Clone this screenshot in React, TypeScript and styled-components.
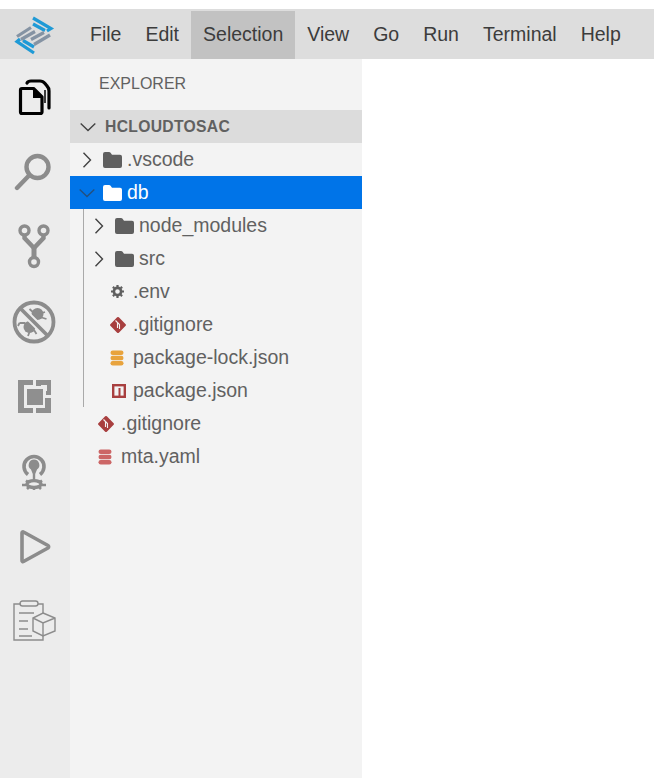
import React from 'react';
import styled, { createGlobalStyle } from 'styled-components';

const GlobalStyle = createGlobalStyle`
  html, body {
    margin: 0;
    padding: 0;
    background: #fff;
  }
  body {
    font-family: 'Liberation Sans', Arial, sans-serif;
  }
`;

const Page = styled.div`
  width: 654px;
  height: 778px;
  overflow: hidden;
  padding-top: 9px;
  box-sizing: border-box;
  display: flex;
  flex-direction: column;
`;

const MenuBar = styled.header`
  height: 50px;
  flex: none;
  display: flex;
  align-items: flex-end;
  background: #dddddd;
`;

const LogoBox = styled.div`
  width: 78px;
  height: 50px;
  flex: none;
  display: flex;
  align-items: center;
  padding: 2px 0 0 8px;
  box-sizing: border-box;
`;

const MenuItem = styled.div<{ $active?: boolean }>`
  height: 48px;
  line-height: 47px;
  padding: 0 12px;
  font-size: 19.5px;
  color: #3c3c3c;
  background: ${(props) => (props.$active ? '#c2c2c2' : 'transparent')};
`;

const Body = styled.div`
  flex: 1;
  display: flex;
  min-height: 0;
`;

const ActivityBar = styled.nav`
  width: 70px;
  flex: none;
  background: #ececec;
`;

const ActivityItem = styled.div`
  height: 75px;
  display: flex;
  align-items: center;
  justify-content: center;
  margin-left: -2px;
`;

const SideBar = styled.aside`
  width: 292px;
  flex: none;
  background: #f3f3f3;
`;

const SideTitle = styled.div`
  height: 51px;
  line-height: 49px;
  padding-left: 29px;
  font-size: 16px;
  color: #616161;
`;

const SectionHeader = styled.div`
  height: 33px;
  display: flex;
  align-items: center;
  background: #dcdcdc;
  color: #616161;
  font-size: 15.7px;
  font-weight: bold;
  letter-spacing: 0.3px;
`;

const SectionChevron = styled.span`
  width: 35px;
  flex: none;
  display: flex;
  justify-content: center;
  padding-left: 1px;
  box-sizing: border-box;
`;

const Row = styled.div<{ $selected?: boolean; $left: number }>`
  height: 33px;
  display: flex;
  align-items: center;
  padding-left: ${(props) => props.$left}px;
  font-size: 19.5px;
  color: ${(props) => (props.$selected ? '#ffffff' : '#616161')};
  background: ${(props) => (props.$selected ? '#0074e8' : 'transparent')};
`;

const Twistie = styled.span`
  width: 33px;
  flex: none;
  display: flex;
  justify-content: center;
`;

const IconBox = styled.span<{ $inset?: number }>`
  width: 24px;
  flex: none;
  display: flex;
  align-items: center;
  box-sizing: border-box;
  padding-left: ${(props) => props.$inset ?? 0}px;
`;

const Group = styled.div`
  position: relative;

  &::before {
    content: '';
    position: absolute;
    left: 13px;
    top: 0;
    bottom: 0;
    width: 1px;
    background: #a9a9a9;
  }
`;

const Logo = () => (
  <svg width="50" height="46" viewBox="0 0 50 46" fill="none">
    <g stroke="#1f9ad6" strokeWidth="3.2">
      <path d="M25 6 L43 16.5 L39 19" />
      <path d="M25 12 L37 18.5" />
      <path d="M26 41 L9 29.5 L12 27" />
      <path d="M26 35 L15 28.5" />
    </g>
    <g stroke="#8593a3" strokeWidth="3.2">
      <path d="M9 24.5 L23 15.5" />
      <path d="M13 27.5 L27 19.5" />
      <path d="M26 32.5 L42 23" />
      <path d="M23 27.5 L36 20.5" />
    </g>
  </svg>
);

const FilesIcon = () => (
  <svg width="34" height="38" viewBox="0 0 34 38" fill="none" stroke="#000">
    <path d="M5 10.5 H16.5 L25 19 V34 A1.5 1.5 0 0 1 23.5 35.5 H5 A1.5 1.5 0 0 1 3.5 34 V12 A1.5 1.5 0 0 1 5 10.5 Z" strokeWidth="3.2" strokeLinejoin="round" />
    <path d="M16 10.5 L25.5 20 H16 Z" fill="#000" stroke="none" />
    <path d="M10 5 Q11 3 14 3 H23 Q26 3 28 5.5 L30 8 Q32 10 32 13 V30" strokeWidth="3.2" strokeLinecap="round" />
    <path d="M28 12 V25" strokeWidth="1.5" />
  </svg>
);

const SearchIcon = () => (
  <svg width="40" height="40" viewBox="0 0 40 40" fill="none" stroke="#8c8c8c" strokeWidth="4.4" strokeLinecap="round">
    <circle cx="23.5" cy="15" r="11" />
    <path d="M15.5 23 L3 36" />
  </svg>
);

const GitIcon = () => (
  <svg width="34" height="46" viewBox="0 0 34 46" fill="none" stroke="#8c8c8c" strokeWidth="3.4">
    <circle cx="7.5" cy="6.5" r="4.5" />
    <circle cx="26.5" cy="6.5" r="4.5" />
    <circle cx="17" cy="38" r="4.5" />
    <path d="M7.5 11 V14 L17 24 L26.5 14 V11" strokeWidth="4.4" />
    <path d="M17 24 V33.5" strokeWidth="5" />
  </svg>
);

const NoDebugIcon = () => (
  <svg width="44" height="44" viewBox="0 0 44 44" fill="none" stroke="#8c8c8c">
    <circle cx="17.5" cy="27" r="6" fill="#8c8c8c" stroke="none" />
    <circle cx="25.5" cy="14" r="6" fill="#8c8c8c" stroke="none" />
    <path d="M17.5 9 L22 13 M33 12 L27 14 M34.5 19 L28 17 M7.5 23 H12.5 L15 26 M7.5 23 L6 26 M24.5 34 L22 30 M16 36 L17.5 32" strokeWidth="1.8" />
    <path d="M8 8 L36 36" stroke="#ececec" strokeWidth="7.5" />
    <path d="M8 8 L36 36" strokeWidth="3.8" />
    <circle cx="22" cy="22" r="19.5" strokeWidth="3.8" />
  </svg>
);

const ExtensionsIcon = () => (
  <svg width="35" height="35" viewBox="8 7 35 35" fill="#8f8f8f">
    <path d="M9 8 H24 V13 H15 V36 H24 V41 H9 Z" />
    <path d="M27 8 H42 V23 H37 V19 H38 V13 H32 V14 H27 Z" />
    <path d="M27 36 H36 V26 H42 V41 H27 Z" />
    <rect x="18" y="17" width="16" height="16" />
  </svg>
);

const TreeIcon = () => (
  <svg width="36" height="38" viewBox="8 8 36 38" fill="none" stroke="#8c8c8c">
    <path d="M20 29.5 A10 10 0 1 1 32 29.5" strokeWidth="3.6" />
    <path d="M26 14.5 a5.5 5.5 0 0 1 3 10 L27.2 29 V37 H24.8 V29 L23 24.5 a5.5 5.5 0 0 1 3 -10 Z" fill="#8c8c8c" stroke="none" />
    <ellipse cx="26" cy="39" rx="7" ry="3.4" strokeWidth="3.4" />
    <path d="M14 40 H19 M33 40 H38 M18 35.5 L20 37 M34 35.5 L32 37 M19 44 L21 42 M33 44 L31 42 M26 43 V45" strokeWidth="2.6" />
  </svg>
);

const PlayIcon = () => (
  <svg width="36" height="38" viewBox="0 0 36 38" fill="none" stroke="#8c8c8c" strokeWidth="3.6" strokeLinejoin="round">
    <path d="M6 5 V32.5 a1 1 0 0 0 1.5 1 L32 20 a1.5 1.5 0 0 0 0 -2.5 L7.5 4 A1 1 0 0 0 6 5 Z" />
  </svg>
);

const DeployIcon = () => (
  <svg width="44" height="44" viewBox="0 0 44 44" fill="none" stroke="#8c8c8c" strokeWidth="1.4">
    <path d="M9 4 H2 V40 H31 V36" />
    <path d="M26 4 H31 V13" />
    <rect x="8" y="1" width="18" height="5" rx="2.5" />
    <path d="M7 13 H22 M7 21 H16 M7 29 H16 M7 36 H20" strokeWidth="1.6" />
    <path d="M31 13 L43 18 V31 L31 36 L21 31 V18 Z M21 18 L31 23 L43 18 M31 23 V36" />
  </svg>
);

const Chevron = ({ open, color = '#424242' }: { open?: boolean; color?: string }) => (
  <svg width="16" height="16" viewBox="0 0 16 16" fill="none" stroke={color} strokeWidth="1.4">
    {open ? <path d="M0.7 4.5 L8 11.5 L15.3 4.5" /> : <path d="M4.5 0.7 L11.5 8 L4.5 15.3" />}
  </svg>
);

const FolderIcon = ({ color = '#5f5f5f' }: { color?: string }) => (
  <svg width="19" height="16" viewBox="0 0 19 16" fill={color}>
    <path d="M0 2 a2 2 0 0 1 2 -2 H6 a2 2 0 0 1 1.6 .8 L9 2.8 H17 a2 2 0 0 1 2 2 V14 a2 2 0 0 1 -2 2 H2 a2 2 0 0 1 -2 -2 Z" />
  </svg>
);

const GearIcon = () => (
  <svg width="15" height="15" viewBox="0 0 15 15" fill="none" stroke="#5f5f5f">
    <circle cx="7.5" cy="7.5" r="3.6" strokeWidth="2.6" />
    <path d="M7.5 1 V3 M7.5 12 V14 M1 7.5 H3 M12 7.5 H14 M2.9 2.9 L4.3 4.3 M10.7 10.7 L12.1 12.1 M2.9 12.1 L4.3 10.7 M10.7 4.3 L12.1 2.9" strokeWidth="2.2" />
  </svg>
);

const GitFileIcon = () => (
  <svg width="18" height="18" viewBox="0 0 18 18">
    <rect x="3" y="3" width="12" height="12" rx="1.2" fill="#a83f3f" transform="rotate(45 9 9)" />
    <path d="M6.5 4.5 L10.5 8.5 V13 M8.5 6.5 V12" stroke="#f3f3f3" strokeWidth="1.1" fill="none" />
  </svg>
);

const DatabaseIcon = ({ color }: { color: string }) => (
  <svg width="14" height="16" viewBox="0 0 14 16" fill={color}>
    <rect x="0.5" y="0.5" width="13" height="4.4" rx="2.2" />
    <rect x="0.5" y="5.8" width="13" height="4.4" rx="2.2" />
    <rect x="0.5" y="11.1" width="13" height="4.4" rx="2.2" />
  </svg>
);

const NpmIcon = () => (
  <svg width="14" height="14" viewBox="0 0 14 14" fill="none" stroke="#a83f3f" strokeWidth="2.4">
    <rect x="1.2" y="1.2" width="11.6" height="11.6" />
    <path d="M7.5 4 V12" strokeWidth="2" />
  </svg>
);

const menuItems = ['File', 'Edit', 'Selection', 'View', 'Go', 'Run', 'Terminal', 'Help'];

const App = () => (
  <Page>
    <GlobalStyle />
    <MenuBar>
      <LogoBox>
        <Logo />
      </LogoBox>
      {menuItems.map((item) => (
        <MenuItem key={item} $active={item === 'Selection'}>
          {item}
        </MenuItem>
      ))}
    </MenuBar>
    <Body>
      <ActivityBar>
        <ActivityItem><FilesIcon /></ActivityItem>
        <ActivityItem><SearchIcon /></ActivityItem>
        <ActivityItem><GitIcon /></ActivityItem>
        <ActivityItem><NoDebugIcon /></ActivityItem>
        <ActivityItem><ExtensionsIcon /></ActivityItem>
        <ActivityItem><TreeIcon /></ActivityItem>
        <ActivityItem><PlayIcon /></ActivityItem>
        <ActivityItem><DeployIcon /></ActivityItem>
      </ActivityBar>
      <SideBar>
        <SideTitle>EXPLORER</SideTitle>
        <SectionHeader>
          <SectionChevron><Chevron open /></SectionChevron>
          HCLOUDTOSAC
        </SectionHeader>
        <Row $left={0}>
          <Twistie><Chevron /></Twistie>
          <IconBox><FolderIcon /></IconBox>
          .vscode
        </Row>
        <Row $left={0} $selected>
          <Twistie><Chevron open color="#24507e" /></Twistie>
          <IconBox><FolderIcon color="#ffffff" /></IconBox>
          db
        </Row>
        <Group>
          <Row $left={12}>
            <Twistie><Chevron /></Twistie>
            <IconBox><FolderIcon /></IconBox>
            node_modules
          </Row>
          <Row $left={12}>
            <Twistie><Chevron /></Twistie>
            <IconBox><FolderIcon /></IconBox>
            src
          </Row>
          <Row $left={39}>
            <IconBox $inset={1}><GearIcon /></IconBox>
            .env
          </Row>
          <Row $left={39}>
            <IconBox><GitFileIcon /></IconBox>
            .gitignore
          </Row>
          <Row $left={39}>
            <IconBox $inset={1}><DatabaseIcon color="#e8a33d" /></IconBox>
            package-lock.json
          </Row>
          <Row $left={39}>
            <IconBox $inset={3}><NpmIcon /></IconBox>
            package.json
          </Row>
        </Group>
        <Row $left={27}>
          <IconBox><GitFileIcon /></IconBox>
          .gitignore
        </Row>
        <Row $left={27}>
          <IconBox $inset={1}><DatabaseIcon color="#cc6666" /></IconBox>
          mta.yaml
        </Row>
      </SideBar>
    </Body>
  </Page>
);

export default App;
